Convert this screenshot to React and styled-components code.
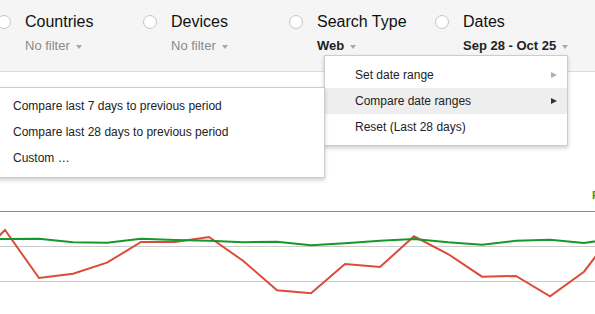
import React from "react";
import styled, { createGlobalStyle } from "styled-components";

const GlobalStyle = createGlobalStyle`
  html, body {
    margin: 0;
    padding: 0;
    background: #ffffff;
  }
  body {
    font-family: "Liberation Sans", Arial, sans-serif;
    color: #222222;
  }
`;

const Page = styled.div`
  position: relative;
  width: 595px;
  height: 314px;
  overflow: hidden;
  background: #ffffff;
`;

const FilterBar = styled.div`
  display: flex;
  height: 71px;
  margin-left: -3px;
  background: #f5f5f5;
  border-bottom: 1px solid #dddddd;
`;

const Filter = styled.div`
  display: flex;
  align-items: flex-start;
  gap: 14px;
  width: 146px;
  flex: none;
  padding-top: 12px;
  box-sizing: border-box;
`;

const Radio = styled.span`
  width: 14px;
  height: 14px;
  margin-top: 3px;
  border-radius: 50%;
  border: 1px solid #c6c6c6;
  background: #ffffff;
  box-sizing: border-box;
  flex: none;
`;

const FilterText = styled.div`
  display: flex;
  flex-direction: column;
  gap: 7px;
`;

const FilterLabel = styled.div`
  font-size: 16px;
  line-height: 19px;
  color: #111111;
  white-space: nowrap;
`;

const FilterValue = styled.div`
  display: flex;
  align-items: center;
  font-size: 13px;
  line-height: 16px;
  white-space: nowrap;
  color: ${(p) => (p.$active ? "#222222" : "#8a8a8a")};
  font-weight: ${(p) => (p.$active ? "bold" : "normal")};
`;

const Caret = styled.span`
  display: inline-block;
  margin-left: 6px;
  margin-top: 2px;
  width: 0;
  height: 0;
  border-left: 3.5px solid transparent;
  border-right: 3.5px solid transparent;
  border-top: 4px solid #a8a8a8;
`;

const Menu = styled.div`
  position: absolute;
  top: 55px;
  left: 324px;
  width: 244px;
  padding: 6px 0 5px;
  box-sizing: border-box;
  background: #ffffff;
  border: 1px solid rgba(0, 0, 0, 0.2);
  box-shadow: 0 2px 4px rgba(0, 0, 0, 0.2);
  z-index: 2;
`;

const SubMenu = styled.div`
  position: absolute;
  top: 31px;
  right: 100%;
  width: 345px;
  padding: 5px 0 6px;
  box-sizing: border-box;
  background: #ffffff;
  border: 1px solid rgba(0, 0, 0, 0.2);
  box-shadow: 0 2px 4px rgba(0, 0, 0, 0.2);
  z-index: 3;
`;

const MenuItem = styled.div`
  display: flex;
  align-items: center;
  justify-content: space-between;
  height: 26px;
  padding: 0 10px 0 ${(p) => p.$indent}px;
  font-size: 12px;
  color: #222222;
  white-space: nowrap;
  background: ${(p) => (p.$highlighted ? "#eeeeee" : "transparent")};
`;

const Arrow = styled.span`
  width: 0;
  height: 0;
  border-top: 3.5px solid transparent;
  border-bottom: 3.5px solid transparent;
  border-left: 6px solid ${(p) => (p.$dark ? "#333333" : "#b0b0b0")};
`;

const ChartArea = styled.div`
  display: flex;
  flex-direction: column;
  padding-top: 117px;
`;

const Legend = styled.div`
  padding-left: 592px;
  font-size: 11px;
  line-height: 13px;
  font-weight: bold;
  color: #3a9a08;
  white-space: nowrap;
`;

const Chart = styled.svg`
  display: block;
  width: 595px;
  height: 112px;
`;

const filters = [
  { label: "Countries", value: "No filter" },
  { label: "Devices", value: "No filter" },
  { label: "Search Type", value: "Web", active: true },
  { label: "Dates", value: "Sep 28 - Oct 25", active: true },
];

const xs = [-29, 5, 39, 73, 107, 141, 175, 209, 243, 277, 311, 345, 380, 414, 448, 482, 516, 550, 584, 618];
const red = [264, 230, 278, 273.7, 262.7, 242, 242, 237, 260.7, 290.3, 293.3, 264, 267, 236.3, 254, 276.7, 276, 296.3, 271.7, 227];
const green = [239, 239, 238.7, 242.3, 242.7, 238.7, 240, 240.7, 242.3, 241.7, 245.3, 243.3, 240.7, 239, 242.3, 244.7, 240.7, 239.7, 243, 238];

const top = 202;
const toPoints = (ys) => ys.map((y, i) => `${xs[i]},${(y - top).toFixed(1)}`).join(" ");

export default function App() {
  return (
    <>
      <GlobalStyle />
      <Page>
        <FilterBar>
          {filters.map((f) => (
            <Filter key={f.label}>
              <Radio />
              <FilterText>
                <FilterLabel>{f.label}</FilterLabel>
                <FilterValue $active={f.active}>
                  {f.value}
                  <Caret />
                </FilterValue>
              </FilterText>
            </Filter>
          ))}
        </FilterBar>

        <ChartArea>
          <Legend>Filtered</Legend>
          <Chart viewBox="0 0 595 112">
            <line x1="0" x2="595" y1="9.5" y2="9.5" stroke="#8c8c8c" strokeWidth="1" />
            <line x1="0" x2="595" y1="44.5" y2="44.5" stroke="#cccccc" strokeWidth="1" />
            <line x1="0" x2="595" y1="79.5" y2="79.5" stroke="#cccccc" strokeWidth="1" />
            <polyline points={toPoints(red)} fill="none" stroke="#dc4a3a" strokeWidth="2" strokeLinejoin="miter" />
            <polyline points={toPoints(green)} fill="none" stroke="#17982a" strokeWidth="2" strokeLinejoin="round" />
          </Chart>
        </ChartArea>

        <Menu>
          <MenuItem $indent={30}>
            Set date range
            <Arrow />
          </MenuItem>
          <MenuItem $indent={30} $highlighted>
            Compare date ranges
            <Arrow $dark />
          </MenuItem>
          <MenuItem $indent={30}>Reset (Last 28 days)</MenuItem>
          <SubMenu>
            <MenuItem $indent={32}>Compare last 7 days to previous period</MenuItem>
            <MenuItem $indent={32}>Compare last 28 days to previous period</MenuItem>
            <MenuItem $indent={32}>Custom …</MenuItem>
          </SubMenu>
        </Menu>
      </Page>
    </>
  );
}
